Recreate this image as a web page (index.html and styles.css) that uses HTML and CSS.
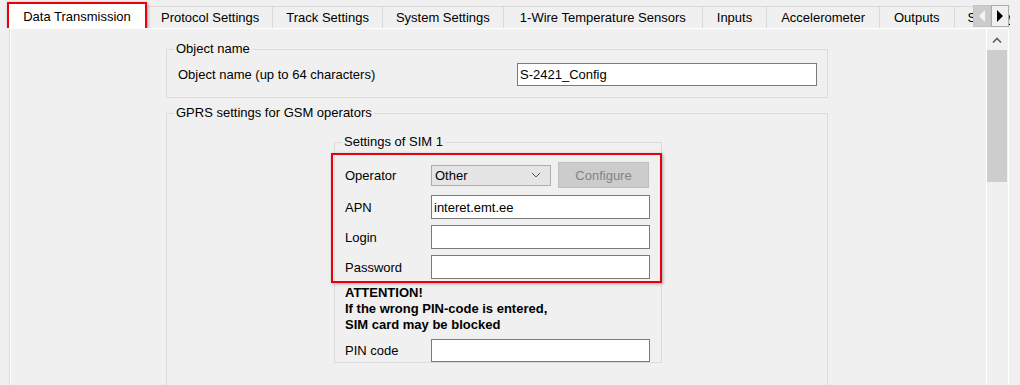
FILE: index.html
```html
<!DOCTYPE html>
<html lang="en">
<head>
  <meta charset="UTF-8" />
  <title>Configurator - Data Transmission</title>
  <link rel="stylesheet" href="styles.css">
</head>
<body>
  <div class="tabs">
    <div class="tab active">Data Transmission</div>
    <div class="tab">Protocol Settings</div>
    <div class="tab">Track Settings</div>
    <div class="tab">System Settings</div>
    <div class="tab">1-Wire Temperature Sensors</div>
    <div class="tab">Inputs</div>
    <div class="tab">Accelerometer</div>
    <div class="tab">Outputs</div>
    <div class="tab">Security</div>
    <div class="tab-scroll">
      <span class="scroll-btn disabled"><span class="tri left"></span></span>
      <span class="scroll-btn"><span class="tri right"></span></span>
    </div>
  </div>

  <div class="panel">
    <div class="content">
      <fieldset class="group">
        <legend>Object name</legend>
        <div class="group-body name-body">
          <div class="row">
            <label class="name-label">Object name (up to 64 characters)</label>
            <input class="text name-input" type="text" value="S-2421_Config" />
          </div>
        </div>
      </fieldset>

      <fieldset class="group gprs">
        <legend>GPRS settings for GSM operators</legend>
        <div class="group-body gprs-body">
          <fieldset class="sim">
            <legend>Settings of SIM 1</legend>
            <div class="highlight">
              <div class="row operator-row">
                <label>Operator</label>
                <div class="select">
                  <span>Other</span>
                  <svg width="10" height="6" viewBox="0 0 10 6"><path d="M1 1 L5 5 L9 1" fill="none" stroke="#555" stroke-width="1"/></svg>
                </div>
                <button class="btn" disabled>Configure</button>
              </div>
              <div class="row field">
                <label>APN</label>
                <input class="text" type="text" value="interet.emt.ee" />
              </div>
              <div class="row field">
                <label>Login</label>
                <input class="text" type="text" value="" />
              </div>
              <div class="row field">
                <label>Password</label>
                <input class="text" type="text" value="" />
              </div>
            </div>
            <p class="warning">ATTENTION!<br>If the wrong PIN-code is entered,<br>SIM card may be blocked</p>
            <div class="row pin-row">
              <label>PIN code</label>
              <input class="text" type="text" value="" />
            </div>
          </fieldset>
        </div>
      </fieldset>
    </div>

    <div class="scrollbar">
      <div class="sb-up">
        <svg width="10" height="6" viewBox="0 0 10 6"><path d="M1 5.5 L5 1.5 L9 5.5" fill="none" stroke="#606060" stroke-width="1.6"/></svg>
      </div>
      <div class="sb-thumb"></div>
    </div>
  </div>
</body>
</html>
```

FILE: styles.css
```css
body {
  margin: 0;
  background: #f0f0f0;
  font-family: "Liberation Sans", Arial, sans-serif;
  font-size: 13px;
  color: #000;
  overflow: hidden;
  height: 385px;
}

/* tab strip */
.tabs {
  position: relative;
  display: flex;
  align-items: flex-start;
  width: 1010px;
  height: 28px;
  white-space: nowrap;
  overflow: hidden;
}
.tab {
  flex: none;
  margin-top: 6px;
  height: 22px;
  line-height: 22px;
  padding: 0 13px;
  border-top: 1px solid #d9d9d9;
  border-right: 1px solid #d9d9d9;
  box-sizing: border-box;
}
.tab:nth-child(5) {
  padding: 0 16px;
}
.tab:nth-child(6),
.tab:nth-child(7),
.tab:nth-child(8) {
  padding: 0 14px;
}
.tab.active {
  margin: 2px 1px 0 7px;
  height: 30px;
  line-height: 26px;
  width: 140px;
  padding: 0;
  text-align: center;
  background: #fff;
  border: 2px solid #e8000b;
  box-shadow: 1px 1px 3px rgba(0, 0, 0, 0.35);
  position: relative;
  z-index: 2;
}
.tab-scroll {
  position: absolute;
  left: 973px;
  top: 5px;
  display: flex;
  background: #f0f0f0;
}
.scroll-btn {
  width: 18px;
  height: 22px;
  box-sizing: border-box;
  border: 1px solid #adadad;
  background: #f0f0f0;
  display: flex;
  align-items: center;
  justify-content: center;
}
.scroll-btn.disabled {
  background: #cccccc;
  border-color: #c4c4c4;
}
.tri {
  width: 0;
  height: 0;
  border-top: 6px solid transparent;
  border-bottom: 6px solid transparent;
}
.tri.left {
  border-right: 6px solid #f4f4f4;
}
.tri.right {
  border-left: 6px solid #000;
}

/* page panel */
.panel {
  display: flex;
  margin-left: 9px;
  width: 1000px;
  height: 357px;
  box-sizing: border-box;
  border-top: 1px solid #fff;
  border-left: 1px solid #d9d9d9;
  border-right: 1px solid #fff;
  overflow: hidden;
}
.content {
  flex: 1;
  padding: 12px 0 0 156px;
  box-shadow: inset 1px 0 #fff;
}
.scrollbar {
  width: 21px;
  border-left: 1px solid #fff;
  display: flex;
  flex-direction: column;
}
.sb-up {
  height: 21px;
  display: flex;
  align-items: center;
  justify-content: center;
  margin-right: 1px;
}
.sb-thumb {
  height: 132px;
  background: #cdcdcd;
  margin-right: 1px;
}

/* group boxes */
fieldset {
  margin: 0;
  padding: 0;
  min-width: 0;
  border: 1px solid #dcdcdc;
  box-sizing: border-box;
}
legend {
  margin-left: 7px;
  padding: 0 2px;
  line-height: 16px;
}
.group {
  width: 662px;
}
.name-body {
  padding: 6px 10px 11px 11px;
}
.gprs {
  margin-top: 7px;
}
.gprs-body {
  padding: 13px 0 40px 167px;
}
.sim {
  width: 328px;
}

.row {
  display: flex;
  align-items: center;
}
.row label {
  width: 86px;
  flex: none;
}
.row .name-label {
  width: 339px;
}

.text {
  box-sizing: border-box;
  height: 24px;
  width: 219px;
  border: 1px solid #7a7a7a;
  background: #fff;
  font: inherit;
  padding: 0 2px;
  margin: 0;
  outline: none;
}
.name-input {
  width: 300px;
  height: 23px;
}

/* highlighted SIM block */
.highlight {
  margin: 3px -1px 0 -4px;
  border: 2px solid #e8000b;
  box-shadow: 1px 1px 3px rgba(0, 0, 0, 0.3);
  padding: 7px 0 2px 12px;
}
.operator-row {
  height: 26px;
}
.field {
  margin-top: 6px;
}
.operator-row + .field {
  margin-top: 7px;
}
.select {
  box-sizing: border-box;
  width: 120px;
  height: 21px;
  border: 1px solid #adadad;
  background: #e5e5e5;
  display: flex;
  align-items: center;
  justify-content: space-between;
  padding: 0 9px 0 3px;
}
.btn {
  margin-left: 7px;
  width: 91px;
  height: 26px;
  border: 1px solid #bfbfbf;
  background: #cccccc;
  color: #838383;
  font: inherit;
  padding: 0;
}

.warning {
  margin: 2px 0 0 10px;
  font-weight: bold;
  line-height: 16px;
}
.pin-row {
  margin: 6px 0 0 10px;
}
.pin-row .text {
  height: 23px;
}
```
